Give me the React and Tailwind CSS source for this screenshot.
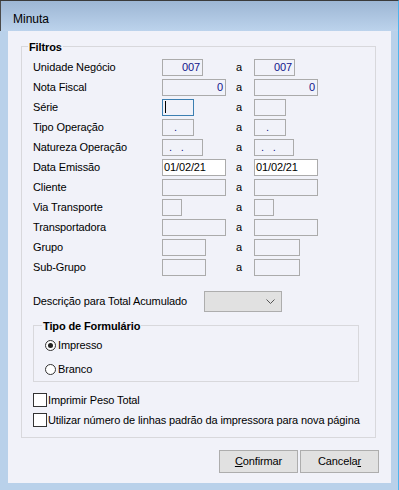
import React from "react";

const FONT = { fontFamily: '"Liberation Sans", Arial, sans-serif', letterSpacing: "-0.12px" };

function Field({ w, text, align = "right", white, focused, blue = true, pl }) {
  return (
    <div
      className={
        "h-[17px] border flex items-center overflow-hidden whitespace-pre text-[11px] leading-none " +
        (focused ? "border-[#3c7fb1] justify-start " : "border-[#ababab] ") +
        (white ? "bg-white " : "bg-[#f1f2f9] ") +
        (focused ? "" : align === "right" ? "justify-end pr-[2px] " : "justify-start ") +
        (blue ? "text-[#12128a]" : "text-black")
      }
      style={{ width: w, paddingLeft: pl }}
    >
      {focused ? <span className="w-px h-[12px] bg-black ml-[2px]" /> : text}
    </div>
  );
}

const rows = [
  { label: "Unidade Negócio", a: { w: 41, text: "007" }, b: { w: 41, text: "007" } },
  { label: "Nota Fiscal", a: { w: 64, text: "0" }, b: { w: 64, text: "0" } },
  { label: "Série", a: { w: 32, focused: true }, b: { w: 32 } },
  { label: "Tipo Operação", a: { w: 32, text: ".", align: "left", pl: 11 }, b: { w: 32, text: ".", align: "left", pl: 11 } },
  { label: "Natureza Operação", a: { w: 41, text: ".   .", align: "left", pl: 6 }, b: { w: 40, text: ".   .", align: "left", pl: 6 } },
  { label: "Data Emissão", a: { w: 64, text: "01/02/21", align: "left", white: true, blue: false, pl: 1 }, b: { w: 64, text: "01/02/21", align: "left", white: true, blue: false, pl: 1 } },
  { label: "Cliente", a: { w: 64 }, b: { w: 64 } },
  { label: "Via Transporte", a: { w: 20 }, b: { w: 20 } },
  { label: "Transportadora", a: { w: 64 }, b: { w: 64 } },
  { label: "Grupo", a: { w: 44 }, b: { w: 46 } },
  { label: "Sub-Grupo", a: { w: 44 }, b: { w: 46 } },
];

function Radio({ checked, label }) {
  return (
    <div className="flex items-center h-[20px]">
      <span className="w-[11px] h-[11px] rounded-full border border-[#333] bg-white flex items-center justify-center">
        {checked && <span className="w-[5px] h-[5px] rounded-full bg-[#222]" />}
      </span>
      <span className="ml-[2px] text-[11px] text-black">{label}</span>
    </div>
  );
}

function Check({ label }) {
  return (
    <div className="flex items-center h-[20px]">
      <span className="w-[14px] h-[14px] border border-[#333] bg-white" />
      <span className="ml-[1px] text-[11px] text-black">{label}</span>
    </div>
  );
}

export default function App() {
  return (
    <div
      className="w-[399px] h-[490px] bg-[#b9d1ea] border-t border-[#3a3a3a] border-r border-r-[#4eb4ec] flex flex-col"
      style={FONT}
    >
      <div className="h-[30px] bg-gradient-to-b from-[#9db6d4] to-[#bcd3ec] flex items-center pl-[12px] border-l border-[#4a4a4a]">
        <span className="text-[12px] text-black mt-[5px]" style={{ letterSpacing: 0 }}>Minuta</span>
      </div>
      <div className="ml-[8px] w-[383px] h-[452px] bg-[#f1f2f9] flex flex-col">
        <div className="relative ml-[13px] mt-[15px] w-[355px] h-[392px] border border-[#d8d8dc] flex flex-col pl-[11px] pt-[10px]">
          <span className="absolute -top-[8px] left-[6px] px-[1px] bg-[#f1f2f9] text-[11px] font-bold text-black">
            Filtros
          </span>
          {rows.map((r) => (
            <div key={r.label} className="h-[20px] flex items-center text-[11px] text-black">
              <span className="w-[129px]">{r.label}</span>
              <div className="w-[72px] flex">
                <Field {...r.a} />
              </div>
              <span className="w-[20px] pl-[2px]">a</span>
              <Field {...r.b} />
            </div>
          ))}
          <div className="mt-[14px] h-[21px] flex items-center text-[11px] text-black">
            <span className="w-[171px]">Descrição para Total Acumulado</span>
            <div className="w-[78px] h-[21px] bg-[#e1e1e1] border border-[#adadad] flex items-center justify-end pr-[6px]">
              <svg width="9" height="6" viewBox="0 0 9 6">
                <path d="M0.5 0.5 L4.5 4.5 L8.5 0.5" fill="none" stroke="#555" strokeWidth="1" />
              </svg>
            </div>
          </div>
          <div className="relative mt-[13px] w-[326px] h-[57px] border border-[#d8d8dc] flex flex-col pl-[11px] pt-[9px]">
            <span className="absolute -top-[8px] left-[8px] px-[1px] bg-[#f1f2f9] text-[11px] font-bold text-black">
              Tipo de Formulário
            </span>
            <Radio checked label="Impresso" />
            <div className="h-[4px]" />
            <Radio label="Branco" />
          </div>
          <div className="mt-[8px] flex flex-col">
            <Check label="Imprimir Peso Total" />
            <Check label="Utilizar número de linhas padrão da impressora para nova página" />
          </div>
        </div>
        <div className="flex justify-end gap-[2px] pr-[12px] mt-[12px]">
          <button className="w-[79px] h-[23px] bg-[#e1e1e1] border border-[#adadad] text-[11px] text-black">
            <span className="underline">C</span>onfirmar
          </button>
          <button className="w-[79px] h-[23px] bg-[#e1e1e1] border border-[#adadad] text-[11px] text-black">
            Cancela<span className="underline">r</span>
          </button>
        </div>
      </div>
    </div>
  );
}
